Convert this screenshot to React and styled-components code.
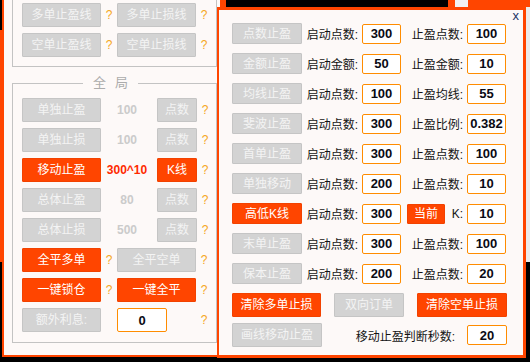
import React from 'react';
import styled, { createGlobalStyle, css } from 'styled-components';

const ORANGE = '#ff4500';
const PANEL = '#fdf9f8';
const CJK = '"Liberation Sans", "Noto Sans CJK SC", sans-serif';

const GlobalStyle = createGlobalStyle`
  html, body { margin: 0; padding: 0; background: #000; }
  body { width: 530px; height: 362px; overflow: hidden; font-family: ${CJK}; }
  * { box-sizing: border-box; }
`;

const Desktop = styled.div`
  position: relative;
  width: 530px;
  height: 362px;
  overflow: hidden;
  background: #000;
`;

/* windows behind the two panels */
const LeftBackWindow = styled.div`
  position: absolute;
  left: 0;
  top: 30px;
  width: 3px;
  height: 232px;
  background: ${ORANGE};
`;

const RightBackWindow = styled.div`
  position: absolute;
  left: 217px;
  top: 0;
  width: 313px;
  height: 262px;
  background: #ececec;
  display: flex;
  flex-direction: column;
`;

const TopStrip = styled.div`
  display: flex;
  height: 7px;
`;

const StripSeg = styled.div`
  width: ${(p) => (p.$w ? `${p.$w}px` : 'auto')};
  flex: ${(p) => (p.$w ? '0 0 auto' : '1')};
  background: ${(p) => p.$c};
`;

/* left window */
const LeftWindow = styled.div`
  position: absolute;
  left: 2px;
  top: -20px;
  width: 220px;
  background: ${PANEL};
  border: 2px solid ${ORANGE};
  padding: 8px 4px 12px 8px;
`;

const Group = styled.fieldset`
  margin: ${(p) => (p.$first ? '0' : '7px 0 0 0')};
  width: 205px;
  min-width: 0;
  border: 1px solid #c3c3c3;
  padding: ${(p) => (p.$first ? '12px 0 9px 9px' : '6px 0 10px 9px')};
  display: flex;
  flex-direction: column;
  gap: 6px;
`;

const Legend = styled.legend`
  margin-left: 61px;
  padding: 0 1px 0 10px;
  font-family: ${CJK};
  font-size: 13px;
  line-height: 18px;
  color: #acacac;
  letter-spacing: 9px;
`;

const LeftRow = styled.div`
  display: grid;
  grid-template-columns: ${(p) =>
    p.$value ? '79px 56px 40px 16px' : '79px 16px 79px 16px'};
  height: 24px;
  align-items: stretch;
`;

const Button = styled.div`
  display: flex;
  align-items: center;
  justify-content: center;
  font-family: ${CJK};
  font-size: 12px;
  line-height: 14px;
  white-space: nowrap;
  border: 1px solid;
  border-radius: 1px;
  ${(p) =>
    p.$red
      ? css`
          background: ${ORANGE};
          border-color: #f24200;
          color: #fff;
        `
      : css`
          background: #d3d3d3;
          border-color: #c5c5c5;
          color: #f4f4f4;
        `}
  width: ${(p) => (p.$w ? `${p.$w}px` : 'auto')};
  height: ${(p) => (p.$h ? `${p.$h}px` : 'auto')};
`;

const Help = styled.div`
  display: flex;
  align-items: center;
  justify-content: center;
  font-family: "Liberation Sans", sans-serif;
  font-size: 12px;
  color: #f5a623;
`;

const Value = styled.div`
  display: flex;
  align-items: center;
  justify-content: center;
  padding-right: 4px;
  font-family: "Liberation Sans", sans-serif;
  font-weight: bold;
  font-size: 12px;
  color: ${(p) => (p.$red ? '#ff2a00' : '#cbcbcb')};
`;

const Field = styled.input`
  width: ${(p) => p.$w}px;
  height: ${(p) => p.$h}px;
  margin: 0;
  padding: 0;
  border: 1px solid #ff8c00;
  border-radius: 2px;
  background: #fff;
  font-family: "Liberation Sans", sans-serif;
  font-weight: bold;
  font-size: 13px;
  color: #0a0a14;
  text-align: center;
  outline: none;
  align-self: center;
`;

/* right window */
const RightWindow = styled.div`
  position: absolute;
  left: 217px;
  top: 7px;
  width: 309px;
  height: 351px;
  background: ${PANEL};
  border: 3px solid ${ORANGE};
  border-left-width: 2px;
  padding: 0 0 0 13px;
  display: flex;
  flex-direction: column;
`;

const TitleBar = styled.div`
  display: flex;
  justify-content: flex-end;
  align-items: flex-start;
  height: 13px;
  padding-right: 4px;
`;

const Close = styled.span`
  font-family: "Liberation Sans", sans-serif;
  font-size: 13px;
  line-height: 13px;
  margin-top: -1px;
  color: #1b3566;
`;

const Settings = styled.div`
  display: flex;
  flex-direction: column;
  gap: 9px;
`;

const SettingRow = styled.div`
  display: grid;
  grid-template-columns: 70px 60px 39px 66px 39px;
  height: 21px;
  align-items: stretch;
`;

const Label = styled.div`
  display: flex;
  align-items: center;
  justify-content: ${(p) => (p.$split ? 'space-between' : 'flex-end')};
  padding: ${(p) => (p.$split ? '0 4px 0 6px' : '0 4px 0 0')};
  font-family: ${CJK};
  font-size: 12px;
  color: #141414;
  white-space: nowrap;
`;

const Actions = styled.div`
  display: flex;
  flex-direction: column;
  gap: 6px;
  width: 275px;
  margin-top: 9px;
`;

const ActionRow = styled.div`
  display: flex;
  justify-content: space-between;
  align-items: stretch;
  height: 24px;
`;

const SecondsLabel = styled(Label)`
  flex: 1;
  padding-right: 12px;
`;

const leftRows = [
  { name: '单独止盈', value: '100', unit: '点数' },
  { name: '单独止损', value: '100', unit: '点数' },
  { name: '移动止盈', value: '300^10', unit: 'K线', red: true },
  { name: '总体止盈', value: '80', unit: '点数' },
  { name: '总体止损', value: '500', unit: '点数' },
];

const settings = [
  ['点数止盈', '启动点数:', '300', '止盈点数:', '100'],
  ['金额止盈', '启动金额:', '50', '止盈金额:', '10'],
  ['均线止盈', '启动点数:', '100', '止盈均线:', '55'],
  ['斐波止盈', '启动点数:', '300', '止盈比例:', '0.382'],
  ['首单止盈', '启动点数:', '300', '止盈点数:', '100'],
  ['单独移动', '启动点数:', '200', '止盈点数:', '10'],
  ['高低K线', '启动点数:', '300', 'K:', '10', true],
  ['末单止盈', '启动点数:', '300', '止盈点数:', '100'],
  ['保本止盈', '启动点数:', '200', '止盈点数:', '20'],
];

export default function App() {
  return (
    <Desktop>
      <GlobalStyle />
      <LeftBackWindow />
      <RightBackWindow>
        <TopStrip>
          <StripSeg $w={9} $c={ORANGE} />
          <StripSeg $w={222} $c="#000" />
          <StripSeg $w={7} $c={ORANGE} />
          <StripSeg $w={13} $c="#f2f2f2" />
          <StripSeg $c={ORANGE} />
        </TopStrip>
      </RightBackWindow>

      <LeftWindow>
        <Group $first>
          <LeftRow>
            <Button>多单止盈线</Button>
            <Help>?</Help>
            <Button>多单止损线</Button>
            <Help>?</Help>
          </LeftRow>
          <LeftRow>
            <Button>空单止盈线</Button>
            <Help>?</Help>
            <Button>空单止损线</Button>
            <Help>?</Help>
          </LeftRow>
        </Group>
        <Group>
          <Legend>全局</Legend>
          {leftRows.map((r) => (
            <LeftRow $value key={r.name}>
              <Button $red={r.red}>{r.name}</Button>
              <Value $red={r.red}>{r.value}</Value>
              <Button $red={r.red}>{r.unit}</Button>
              <Help>?</Help>
            </LeftRow>
          ))}
          <LeftRow>
            <Button $red>全平多单</Button>
            <Help>?</Help>
            <Button>全平空单</Button>
            <Help>?</Help>
          </LeftRow>
          <LeftRow>
            <Button $red>一键锁仓</Button>
            <Help>?</Help>
            <Button $red>一键全平</Button>
            <Help>?</Help>
          </LeftRow>
          <LeftRow>
            <Button>额外利息:</Button>
            <Help />
            <Field $w={50} $h={24} readOnly defaultValue="0" />
            <Help>?</Help>
          </LeftRow>
        </Group>
      </LeftWindow>

      <RightWindow>
        <TitleBar>
          <Close>x</Close>
        </TitleBar>
        <Settings>
          {settings.map(([name, l1, v1, l2, v2, red]) => (
            <SettingRow key={name}>
              <Button $red={red}>{name}</Button>
              <Label>{l1}</Label>
              <Field $w={39} $h={20} readOnly defaultValue={v1} />
              {red ? (
                <Label $split>
                  <Button $red $w={38} $h={20}>当前</Button>
                  <span>{l2}</span>
                </Label>
              ) : (
                <Label>{l2}</Label>
              )}
              <Field $w={39} $h={20} readOnly defaultValue={v2} />
            </SettingRow>
          ))}
        </Settings>
        <Actions>
          <ActionRow>
            <Button $red $w={89}>清除多单止损</Button>
            <Button $w={70}>双向订单</Button>
            <Button $red $w={90}>清除空单止损</Button>
          </ActionRow>
          <ActionRow>
            <Button $w={90}>画线移动止盈</Button>
            <SecondsLabel>移动止盈判断秒数:</SecondsLabel>
            <Field $w={40} $h={20} readOnly defaultValue="20" />
          </ActionRow>
        </Actions>
      </RightWindow>
    </Desktop>
  );
}
